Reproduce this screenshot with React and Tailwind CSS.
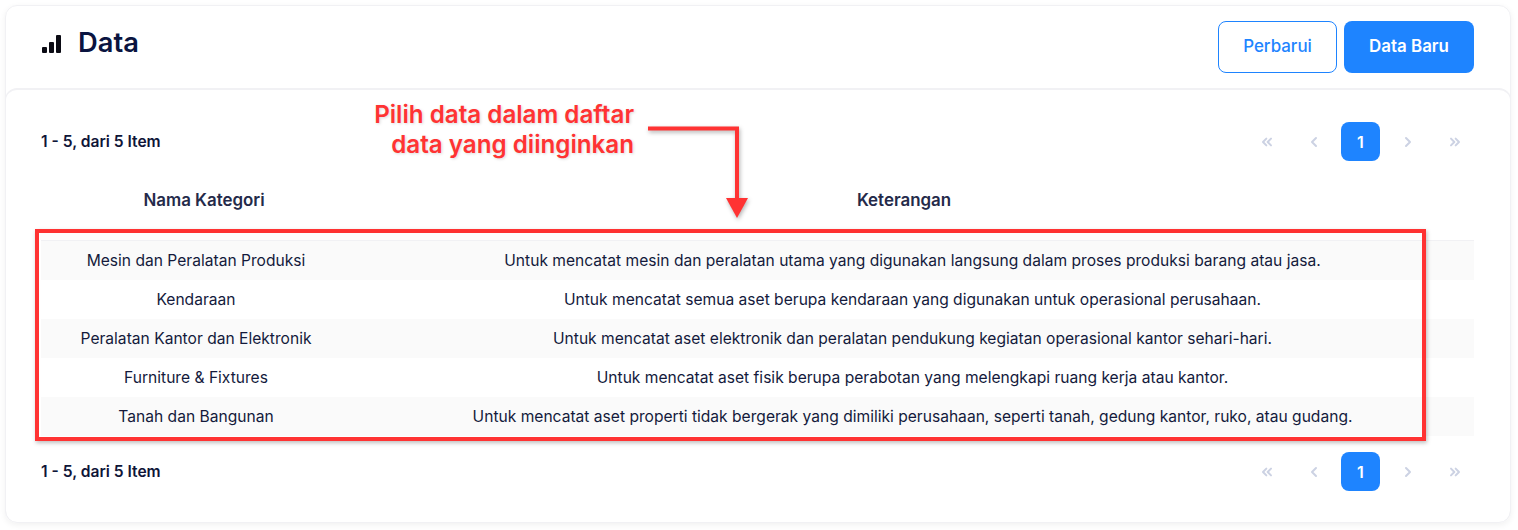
import React from 'react';
import { ChevronLeft, ChevronRight, ChevronsLeft, ChevronsRight } from 'lucide-react';

const rows = [
  ['Mesin dan Peralatan Produksi', 'Untuk mencatat mesin dan peralatan utama yang digunakan langsung dalam proses produksi barang atau jasa.'],
  ['Kendaraan', 'Untuk mencatat semua aset berupa kendaraan yang digunakan untuk operasional perusahaan.'],
  ['Peralatan Kantor dan Elektronik', 'Untuk mencatat aset elektronik dan peralatan pendukung kegiatan operasional kantor sehari-hari.'],
  ['Furniture & Fixtures', 'Untuk mencatat aset fisik berupa perabotan yang melengkapi ruang kerja atau kantor.'],
  ['Tanah dan Bangunan', 'Untuk mencatat aset properti tidak bergerak yang dimiliki perusahaan, seperti tanah, gedung kantor, ruko, atau gudang.'],
];

const Pager = () => (
  <div className="flex items-center justify-between h-[39px]">
    <span className="text-[15.6px] leading-[36px] font-semibold text-[#0f1538]">1 - 5, dari 5 Item</span>
    <div className="flex items-center gap-[8px] text-[#ccd2e3]">
      <span className="w-[39px] flex justify-center"><ChevronsLeft size={16} strokeWidth={3} /></span>
      <span className="w-[39px] flex justify-center"><ChevronLeft size={16} strokeWidth={3} /></span>
      <span className="w-[39px] h-[39px] rounded-lg bg-[#1e84ff] text-white text-[16px] font-semibold flex items-center justify-center">1</span>
      <span className="w-[39px] flex justify-center"><ChevronRight size={16} strokeWidth={3} /></span>
      <span className="w-[39px] flex justify-center"><ChevronsRight size={16} strokeWidth={3} /></span>
    </div>
  </div>
);

export default function App() {
  return (
    <div className="relative w-[1518px] h-[530px] bg-white overflow-hidden font-['Inter',sans-serif] text-[#141a3c] pt-[5px] px-[5px]">
      <div className="w-[1506px] h-[518px] rounded-xl border border-[#f1f1f4] shadow-[0_2px_6px_rgba(0,0,0,0.06)] flex flex-col">
        <div className="h-[82px] flex justify-between pl-[35px] pr-[36px] pt-[15px] shrink-0">
          <div className="flex items-start gap-[17px] pt-[4px]">
            <svg width="19" height="18" viewBox="0 0 19 18" className="mt-[10px] ml-px fill-[#0b0b14]">
              <rect x="0" y="12" width="5" height="6" rx="1" />
              <rect x="7" y="7" width="5" height="11" rx="1" />
              <rect x="14" y="0" width="5" height="18" rx="1" />
            </svg>
            <h1 className="text-[27.3px] leading-[36px] font-semibold text-[#0a1440]">Data</h1>
          </div>
          <div className="flex gap-[7px]">
            <button className="w-[119px] h-[52px] rounded-lg border border-[#1e84ff] bg-white text-[#1e84ff] text-[16.9px] font-medium">Perbarui</button>
            <button className="w-[130px] h-[52px] rounded-lg bg-[#1e84ff] text-white text-[16.9px] font-semibold">Data Baru</button>
          </div>
        </div>
        <div className="flex-1 -mx-px rounded-xl border-x border-t-2 border-[#f1f1f4] pl-[35px] pr-[36px] pt-[32px]">
          <Pager />
          <div className="flex h-[80px] border-b border-[#f1f1f4] text-[16.9px] font-semibold text-[#242a4a] pb-[22px] items-end">
            <div className="w-[326px] text-center pb-[5px]">Nama Kategori</div>
            <div className="flex-1 text-center pr-[33px] pb-[5px]">Keterangan</div>
          </div>
          {rows.map((row, i) => (
            <div key={row[0]} className={`flex h-[39px] items-center text-[15.6px] ${i % 2 === 0 ? 'bg-[#fafafa]' : 'bg-white'}`}>
              <div className="w-[310px] text-center">{row[0]}</div>
              <div className="flex-1 text-center">{row[1]}</div>
            </div>
          ))}
          <div className="mt-[16px]"><Pager /></div>
        </div>
      </div>

      {/* annotation */}
      <div className="absolute left-[300px] top-[100px] w-[334px] text-right text-[24.2px] leading-[30px] font-semibold text-[#ff3333] [text-shadow:1px_1px_3px_rgba(0,0,0,0.15)]">
        Pilih data dalam daftar<br />data yang diinginkan
      </div>
      <svg className="absolute left-[640px] top-[120px] drop-shadow-[1px_2px_2px_rgba(0,0,0,0.3)]" width="120" height="104" viewBox="0 0 120 104">
        <path d="M8 8.5H97V80" fill="none" stroke="#ff3333" strokeWidth="4" />
        <path d="M86 78H108L97 98Z" fill="#ff3333" />
      </svg>
      <div className="absolute left-[35px] top-[229px] w-[1391px] h-[212px] border-[4px] border-[#ff3333] shadow-[1px_2px_4px_rgba(0,0,0,0.25)]" />
    </div>
  );
}
